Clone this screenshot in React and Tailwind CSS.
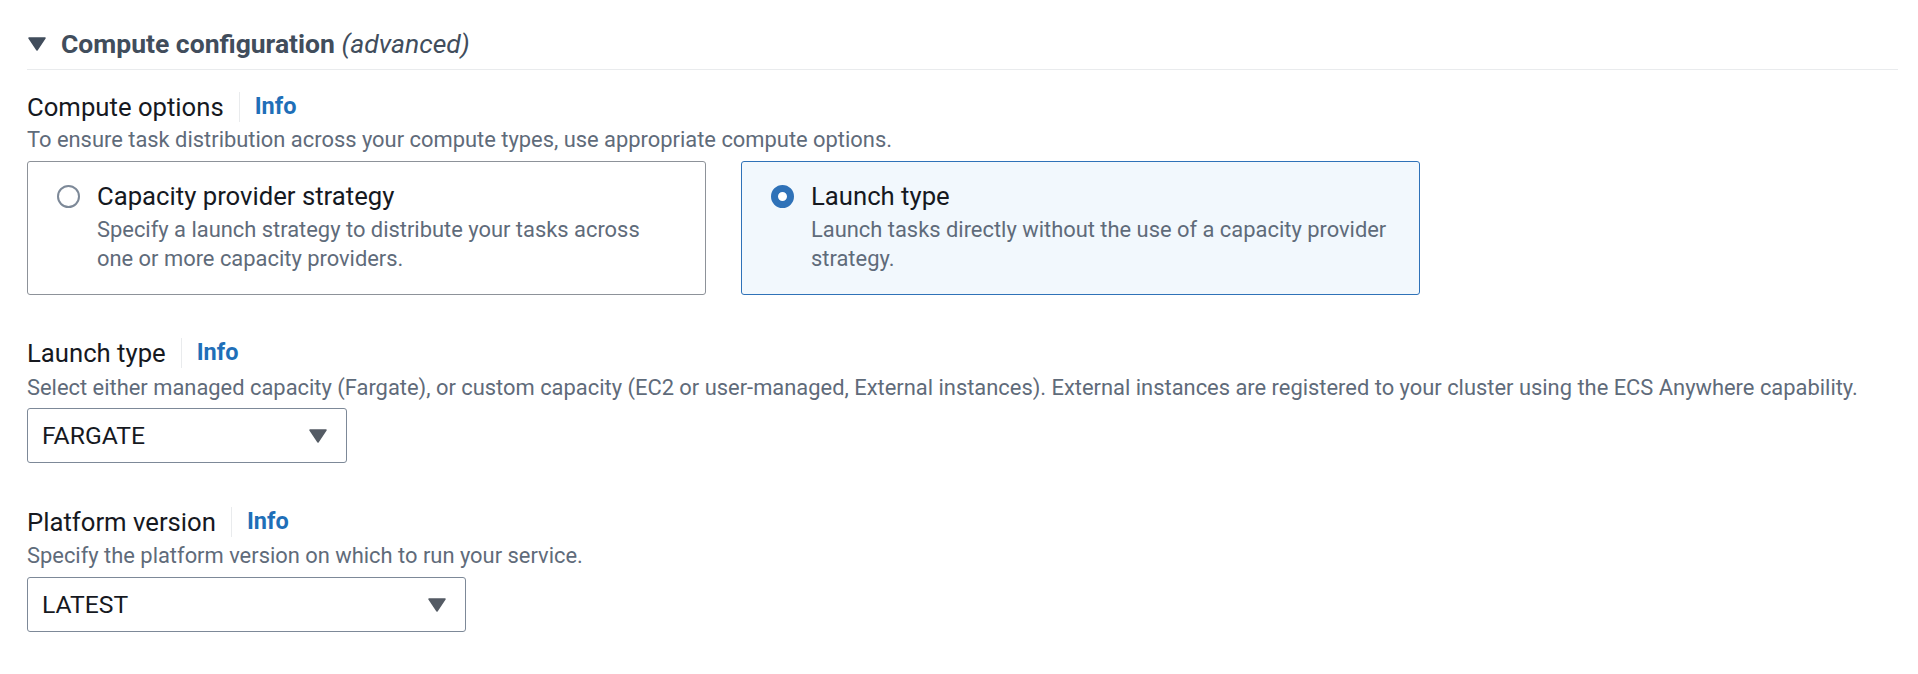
import React, { useState } from 'react';

const font = { fontFamily: 'Roboto, "Noto Sans", Arial, sans-serif' };

const Caret = ({ className }) => (
  <svg viewBox="0 0 18 14" className={className} aria-hidden="true">
    <path d="M1 1h16L9 13z" fill="currentColor" stroke="currentColor" strokeWidth="1.5" strokeLinejoin="round" />
  </svg>
);

const Label = ({ children }) => (
  <div className="flex items-center h-[34px]">
    <span className="text-[25.7px] leading-[34px] text-[#16191f]">{children}</span>
    <span className="mx-[15px] h-[30px] w-px bg-[#e9ebed]" />
    <a href="#" className="text-[23.5px] font-bold text-[#1f6fb8]">Info</a>
  </div>
);

const Desc = ({ children, className = '' }) => (
  <p className={`text-[21.9px] leading-[28px] text-[#5f6b7a] ${className}`}>{children}</p>
);

const Radio = ({ checked }) =>
  checked ? (
    <span className="mt-[6px] h-[23px] w-[23px] shrink-0 rounded-full border-[7px] border-[#2f72b8] bg-white" />
  ) : (
    <span className="mt-[6px] h-[23px] w-[23px] shrink-0 rounded-full border-2 border-[#7d8998] bg-white" />
  );

const Tile = ({ title, desc, checked, onClick }) => (
  <button
    type="button"
    onClick={onClick}
    className={`flex h-[134px] w-[679px] items-start gap-[17px] rounded-[3px] border pl-[29px] pr-[28px] pt-[17px] text-left ${
      checked ? 'border-[#2f72b8] bg-[#f2f8fd]' : 'border-[#8d9299] bg-white'
    }`}
  >
    <Radio checked={checked} />
    <div>
      <div className="text-[25.7px] leading-[34px] text-[#16191f]">{title}</div>
      <Desc className="mt-[2px] leading-[29px]">{desc}</Desc>
    </div>
  </button>
);

const Select = ({ value, width }) => (
  <div
    className={`flex h-[55px] items-center justify-between rounded-[3px] border border-[#7d8998] bg-white pl-[14px] pr-[19px] ${width}`}
  >
    <span className="text-[24.7px] text-[#16191f]">{value}</span>
    <Caret className="h-[14px] w-[18px] text-[#545b64]" />
  </div>
);

export default function App() {
  const [mode, setMode] = useState('launch');

  return (
    <div style={font} className="h-[674px] w-full bg-white pl-[27px] pr-[20px]">
      <div className="flex h-[70px] items-start gap-[15px] pt-[28px] border-b border-[#e9ebed]">
        <Caret className="mt-[9px] ml-px h-[14px] w-[18px] text-[#414d5c]" />
        <h2 className="text-[26.5px] leading-[32px] font-bold text-[#414d5c]">
          Compute configuration <span className="font-normal italic">(advanced)</span>
        </h2>
      </div>

      <div className="mt-[20px]">
        <Label>Compute options</Label>
        <Desc className="mt-[2px]">To ensure task distribution across your compute types, use appropriate compute options.</Desc>
        <div className="mt-[7px] flex gap-[35px]">
          <Tile
            title="Capacity provider strategy"
            desc="Specify a launch strategy to distribute your tasks across one or more capacity providers."
            checked={mode === 'capacity'}
            onClick={() => setMode('capacity')}
          />
          <Tile
            title="Launch type"
            desc="Launch tasks directly without the use of a capacity provider strategy."
            checked={mode === 'launch'}
            onClick={() => setMode('launch')}
          />
        </div>
      </div>

      <div className="mt-[41px]">
        <Label>Launch type</Label>
        <Desc className="mt-[4px]">
          Select either managed capacity (Fargate), or custom capacity (EC2 or user-managed, External instances). External instances are registered to your cluster using the ECS Anywhere capability.
        </Desc>
        <div className="mt-[6px]">
          <Select value="FARGATE" width="w-[320px]" />
        </div>
      </div>

      <div className="mt-[42px]">
        <Label>Platform version</Label>
        <Desc className="mt-[3px]">Specify the platform version on which to run your service.</Desc>
        <div className="mt-[7px]">
          <Select value="LATEST" width="w-[439px]" />
        </div>
      </div>
    </div>
  );
}
